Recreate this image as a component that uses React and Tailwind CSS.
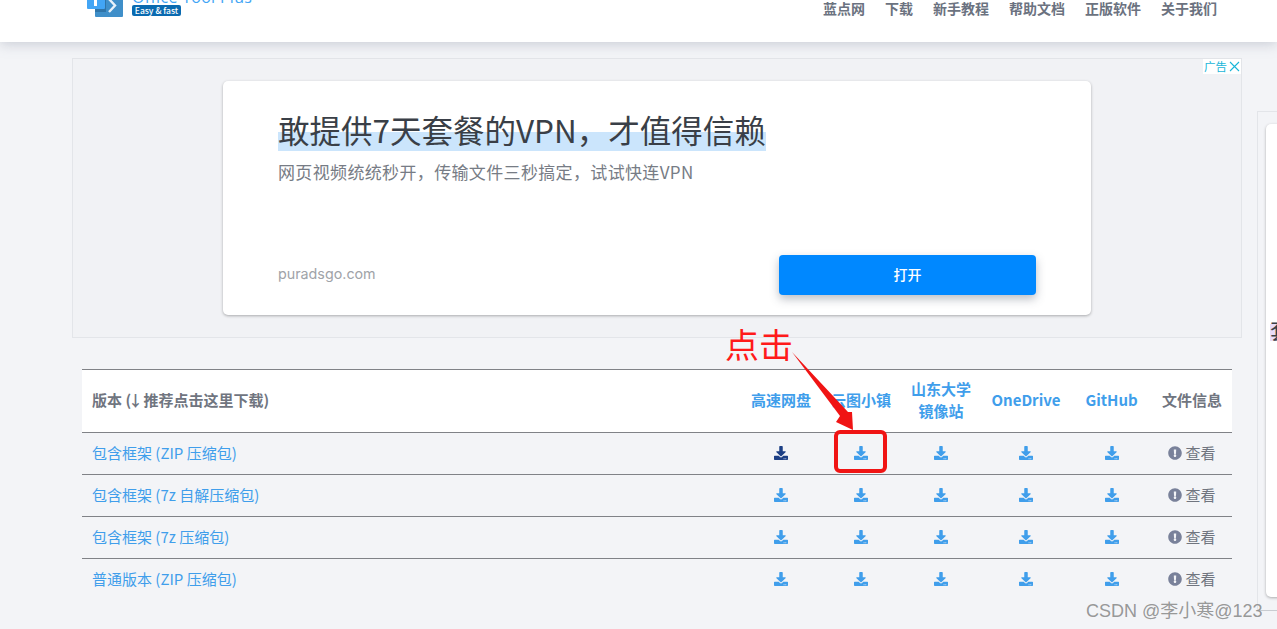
import { FaDownload, FaExclamationCircle } from 'react-icons/fa';

const nav = ['蓝点网', '下载', '新手教程', '帮助文档', '正版软件', '关于我们'];
const rows = ['包含框架 (ZIP 压缩包)', '包含框架 (7z 自解压缩包)', '包含框架 (7z 压缩包)', '普通版本 (ZIP 压缩包)'];
const cols = 'grid grid-cols-[659px_80px_80px_80px_90px_81px_80px] items-center';

function Header() {
  return (
    <header className="relative z-10 h-[42px] bg-white shadow-[0_2px_12px_rgba(120,130,150,0.35)] overflow-hidden">
      <div className="flex items-start justify-between pl-[87px] pr-[60px]">
        <div className="flex items-start">
          <svg width="36" height="18" viewBox="0 0 36 18">
            <rect x="8" y="-2" width="28" height="19" rx="1" fill="#3f8fc9" />
            <rect x="8" y="-2" width="11" height="14" fill="#2f74a8" />
            <rect x="0" y="-2" width="18" height="11" rx="1" fill="#42a5f5" />
            <rect x="7" y="0" width="3" height="6" fill="#fff" />
            <path d="M22 -1l6 6.5-6 6.5" stroke="#e8f2fa" strokeWidth="2.4" fill="none" />
          </svg>
          <div className="ml-[9px]">
            <div className="h-[3px] overflow-hidden">
              <div className="-mt-[15px] font-['Open_Sans',sans-serif] text-[16px] leading-[24px] tracking-[0.3px] whitespace-nowrap text-[#42a5f5]">
                Office Tool Plus
              </div>
            </div>
            <div className="mt-[2px] h-[11px] w-[49px] rounded-[2px] bg-[#0a6ab0] text-center text-[8.5px] leading-[11px] font-medium text-white">
              Easy &amp; fast
            </div>
          </div>
        </div>
        <nav className="flex gap-[20px] text-[14px] font-bold leading-[16px] text-[#6b7280]">
          {nav.map((n) => (
            <span key={n}>{n}</span>
          ))}
        </nav>
      </div>
    </header>
  );
}

function AdCard() {
  return (
    <div className="relative h-[280px] border border-[#e3e5e9] bg-[#f1f2f5] pt-[22px]">
      <div className="absolute right-0 top-0 flex h-[15px] items-center gap-[2px] bg-white pl-[1px] pr-[1px] text-[11.5px] leading-none text-[#19b5d8]">
        <span>广告</span>
        <svg width="11" height="11" viewBox="0 0 11 11">
          <path d="M1 1l9 9M10 1l-9 9" stroke="#19b5d8" strokeWidth="1.1" />
        </svg>
      </div>
      <div className="mx-auto h-[234px] w-[868px] rounded-[5px] bg-white pl-[55px] pr-[55px] pt-[27px] shadow-[0_1px_3px_rgba(0,0,0,0.3)]">
        <h2 className="inline-block bg-[linear-gradient(transparent_56%,#cbe5fc_56%)] text-[31.5px] leading-[43px] font-normal text-[#3a3f47]">
          敢提供7天套餐的VPN，才值得信赖
        </h2>
        <p className="mt-[9px] text-[17px] leading-[24px] tracking-[0.35px] text-[#777c85]">网页视频统统秒开，传输文件三秒搞定，试试快连VPN</p>
        <div className="mt-[71px] flex items-center justify-between">
          <span className="pb-[2px] font-['Inter',sans-serif] text-[14.3px] text-[#a0a3a8]">puradsgo.com</span>
          <div className="h-[40px] w-[257px] rounded-[4px] bg-[#0088ff] text-center text-[14px] font-medium leading-[38px] text-white shadow-[0_4px_10px_rgba(60,70,90,0.35)]">
            打开
          </div>
        </div>
      </div>
    </div>
  );
}

function DownloadTable() {
  return (
    <div className="mx-[10px] mt-[31px] w-[1150px] text-[15px]">
      <div className={`${cols} h-[64px] border-y border-[#808287] bg-white pb-[2px] font-bold text-[#409eeb]`}>
        <div className="pl-[10px] text-[#70757f]">
          版本 (<span className="inline-flex w-[9px] justify-center">↓</span> 推荐点击这里下载)
        </div>
        <div className="text-center">高速网盘</div>
        <div className="text-center">云图小镇</div>
        <div className="text-center leading-[22px]">
          山东大学
          <br />
          镜像站
        </div>
        <div className="text-center">OneDrive</div>
        <div className="text-center">GitHub</div>
        <div className="text-center text-[#70757f]">文件信息</div>
      </div>
      {rows.map((r, i) => (
        <div key={r} className={`${cols} h-[42px] border-b pb-[1px] ${i < 3 ? 'border-[#808287]' : 'border-transparent'}`}>
          <div className="pl-[10px] text-[#409eeb]">{r}</div>
          {[0, 1, 2, 3, 4].map((c) => (
            <div key={c} className="flex justify-center">
              <FaDownload size={14} color={i === 0 && c === 0 ? '#1c3f85' : '#409eeb'} />
            </div>
          ))}
          <div className="flex items-center justify-center gap-[3px] text-[#70757f]">
            <FaExclamationCircle size={14} color="#79819a" />
            <span>查看</span>
          </div>
        </div>
      ))}
    </div>
  );
}

function Sidebar() {
  return (
    <aside className="mt-[69px] h-[500px] flex-1 border-y border-l border-t-[#e3e5e9] border-l-[#e3e5e9] border-b-[#c9ccd1] pl-[8px] pt-[12px]">
      <div className="h-[473px] overflow-hidden rounded-l-[5px] bg-white pl-[4px] pt-[193px] shadow-[0_1px_3px_rgba(0,0,0,0.3)]">
        <div className="bg-[linear-gradient(transparent_28%,#e8dcf8_28%)] text-[22px] leading-[24px] text-[#3a3f47]">套</div>
        <div className="mt-[56px] pl-[6px] text-[11px] leading-[14px] text-[#999]">，</div>
      </div>
    </aside>
  );
}

export default function App() {
  return (
    <div className="relative h-[629px] w-[1277px] overflow-hidden bg-[#f3f4f7] font-['Noto_Sans_CJK_SC','Noto_Sans',sans-serif]">
      <Header />
      <div className="flex">
        <main className="w-[1257px] pl-[72px] pr-[15px] pt-[16px]">
          <AdCard />
          <DownloadTable />
        </main>
        <Sidebar />
      </div>

      {/* screenshot annotation on top of the page */}
      <span className="absolute left-[725px] top-[324px] text-[34px] leading-[40px] text-[#ff1a1a]">点击</span>
      <svg className="absolute left-[790px] top-[350px]" width="66" height="84" viewBox="0 0 66 84">
        <path d="M2 2L58 62L62 62L63 80L46 72L50 66Z" fill="#f01414" />
      </svg>
      <div className="absolute left-[834px] top-[430px] h-[43px] w-[53px] rounded-[6px] border-[4px] border-[#f01414]" />
      <span className="absolute left-[1086px] top-[600px] font-['Liberation_Sans','Noto_Sans_CJK_SC',sans-serif] text-[18px] leading-[22px] text-[#8c8c8c]/90">
        CSDN @李小寒@123
      </span>
    </div>
  );
}
